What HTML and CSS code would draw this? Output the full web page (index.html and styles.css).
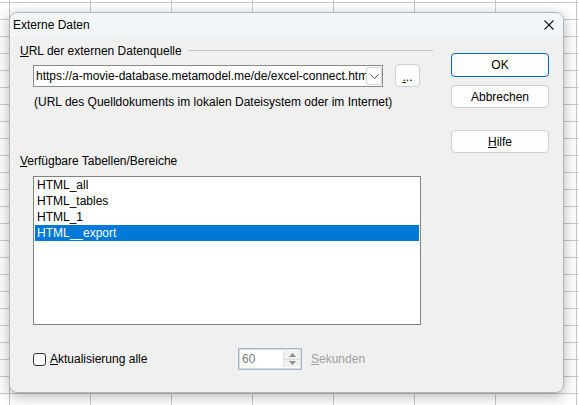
FILE: index.html
```
<!DOCTYPE html>
<html lang="de">
<head>
<meta charset="utf-8">
<title>Externe Daten</title>
<link rel="stylesheet" href="styles.css">
</head>
<body>
<div class="sheet">
  <div class="dialog">
    <div class="titlebar">
      <span class="title">Externe Daten</span>
      <svg class="close" width="10" height="10" viewBox="0 0 10 10"><path d="M0.5 0.5 L9.5 9.5 M9.5 0.5 L0.5 9.5" stroke="#1a1a1a" stroke-width="1.1" fill="none"/></svg>
    </div>
    <div class="body">
      <div class="main">
        <div class="group-head"><span class="label"><u>U</u>RL der externen Datenquelle</span><span class="rule"></span></div>
        <div class="url-row">
          <div class="combo">
            <span class="combo-text">https://a-movie-database.metamodel.me/de/excel-connect.html</span>
            <span class="combo-btn"><svg width="9" height="5" viewBox="0 0 9 5"><path d="M0.5 0.5 L4.5 4.5 L8.5 0.5" stroke="#555" stroke-width="1" fill="none"/></svg></span>
          </div>
          <div class="btn dots"><u>.</u>..</div>
        </div>
        <div class="hint">(URL des Quelldokuments im lokalen Dateisystem oder im Internet)</div>
        <div class="label tables-label"><u>V</u>erfügbare Tabellen/Bereiche</div>
        <div class="list">
          <div class="item">HTML_all</div>
          <div class="item">HTML_tables</div>
          <div class="item">HTML_1</div>
          <div class="item selected">HTML__export</div>
        </div>
        <div class="refresh-row">
          <div class="check-wrap"><span class="checkbox"></span><span class="check-label"><u>A</u>ktualisierung alle</span></div>
          <div class="spin">
            <span class="spin-value">60</span>
            <span class="spin-btns">
              <span class="spin-up"><svg width="7" height="4" viewBox="0 0 7 4"><path d="M0 4 L3.5 0 L7 4 Z" fill="#8c8c8c"/></svg></span>
              <span class="spin-down"><svg width="7" height="4" viewBox="0 0 7 4"><path d="M0 0 L3.5 4 L7 0 Z" fill="#8c8c8c"/></svg></span>
            </span>
          </div>
          <span class="unit"><u>S</u>ekunden</span>
        </div>
      </div>
      <div class="side">
        <div class="btn push default">OK</div>
        <div class="btn push cancel">Abbrechen</div>
        <div class="btn push help"><u>H</u>ilfe</div>
      </div>
    </div>
  </div>
</div>
</body>
</html>
```
FILE: styles.css
```
html, body {
  margin: 0;
  padding: 0;
}
body {
  font-family: "Liberation Sans", Arial, sans-serif;
  font-size: 12px;
  color: #000;
}
.sheet {
  width: 579px;
  height: 405px;
  box-sizing: border-box;
  padding: 12px 0 0 9px;
  overflow: hidden;
  background-color: #fff;
  background-image:
    repeating-linear-gradient(to right, #c9c9c9 0 1px, transparent 1px 81px),
    repeating-linear-gradient(to bottom, #c9c9c9 0 1px, transparent 1px 17px);
  background-position: 9px 0, 0 2px;
}
.dialog {
  width: 555px;
  height: 381px;
  box-sizing: border-box;
  border: 1px solid #b3b3b3;
  border-radius: 8px;
  background: #f0f0f0;
  box-shadow: 0 3px 14px rgba(0,0,0,0.30);
  overflow: hidden;
  display: flex;
  flex-direction: column;
}
.titlebar {
  height: 23px;
  flex: none;
  background: #f3f6f9;
  display: flex;
  align-items: center;
  justify-content: space-between;
  padding: 0 9px 0 3px;
}
.title {
  line-height: 23px;
  padding-top: 1px;
}
.close {
  display: block;
}
.body {
  display: flex;
  padding: 7px 0 0 10px;
}
.main {
  width: 413px;
  display: flex;
  flex-direction: column;
}
.label {
  line-height: 16px;
  height: 16px;
  white-space: nowrap;
}
.group-head {
  display: flex;
  align-items: center;
  height: 16px;
}
.rule {
  flex: 1;
  height: 0;
  border-top: 1px solid #c4c4c4;
  margin-left: 6px;
  margin-top: -1px;
}
.url-row {
  display: flex;
  align-items: flex-start;
  margin: 6px 0 0 13px;
}
.combo {
  width: 350px;
  height: 22px;
  box-sizing: border-box;
  border: 1px solid #8a8a8a;
  background: #fff;
  display: flex;
  align-items: stretch;
  overflow: hidden;
}
.combo-text {
  flex: 1;
  overflow: hidden;
  white-space: nowrap;
  line-height: 20px;
  padding-left: 2px;
}
.combo-btn {
  flex: none;
  width: 16px;
  margin: 1px 0 1px 0;
  box-sizing: border-box;
  border: 1px solid #d4d4d4;
  border-radius: 2px;
  background: #fdfdfd;
  display: flex;
  align-items: center;
  justify-content: center;
}
.combo-btn svg {
  display: block;
}
.btn {
  box-sizing: border-box;
  border: 1px solid #d0d0d0;
  border-radius: 4px;
  background: #fdfdfd;
  display: flex;
  align-items: center;
  justify-content: center;
  white-space: nowrap;
}
.dots {
  width: 25px;
  height: 23px;
  margin: -1px 0 0 12px;
  line-height: 23px;
  padding-top: 3px;
}
.hint {
  margin: 7px 0 0 14px;
  line-height: 16px;
  height: 16px;
  white-space: nowrap;
}
.tables-label {
  margin-top: 43px;
}
.list {
  margin: 7px 0 0 13px;
  width: 388px;
  height: 149px;
  box-sizing: border-box;
  border: 1px solid #828282;
  background: #fff;
  padding: 0 1px;
}
.item {
  height: 16px;
  line-height: 16px;
  padding-left: 2px;
  white-space: nowrap;
}
.item.selected {
  background: #0078d7;
  color: #fff;
}
.refresh-row {
  display: flex;
  align-items: center;
  height: 22px;
  margin: 23px 0 0 13px;
}
.check-wrap {
  width: 205px;
  display: flex;
  align-items: center;
}
.checkbox {
  width: 13px;
  height: 13px;
  box-sizing: border-box;
  border: 1px solid #333;
  border-radius: 3px;
  background: #fbfbfb;
  flex: none;
}
.check-label {
  margin-left: 4px;
  line-height: 16px;
  white-space: nowrap;
}
.spin {
  width: 64px;
  height: 22px;
  box-sizing: border-box;
  border: 1px solid #a7b6ca;
  box-shadow: inset 0 0 0 1px #d3dbe6;
  background: #fff;
  display: flex;
  align-items: stretch;
  flex: none;
}
.spin-value {
  flex: 1;
  color: #7a7a7a;
  line-height: 20px;
  padding-left: 3px;
}
.spin-btns {
  width: 16px;
  margin: 2px 1px 2px 0;
  display: flex;
  flex-direction: column;
  background: #f0f0f0;
  border-left: 1px solid #e2e2e2;
}
.spin-up, .spin-down {
  flex: 1;
  display: flex;
  align-items: center;
  justify-content: center;
}
.spin-up {
  border-bottom: 1px solid #dcdcdc;
}
.spin-btns svg {
  display: block;
}
.unit {
  margin-left: 9px;
  color: #a0a0a0;
  line-height: 16px;
}
.side {
  width: 98px;
  margin-left: 18px;
  padding-top: 10px;
  display: flex;
  flex-direction: column;
}
.push {
  width: 98px;
  height: 23px;
}
.default {
  height: 24px;
  border-color: #0067c0;
}
.cancel {
  margin-top: 8px;
}
.help {
  margin-top: 22px;
}
```
